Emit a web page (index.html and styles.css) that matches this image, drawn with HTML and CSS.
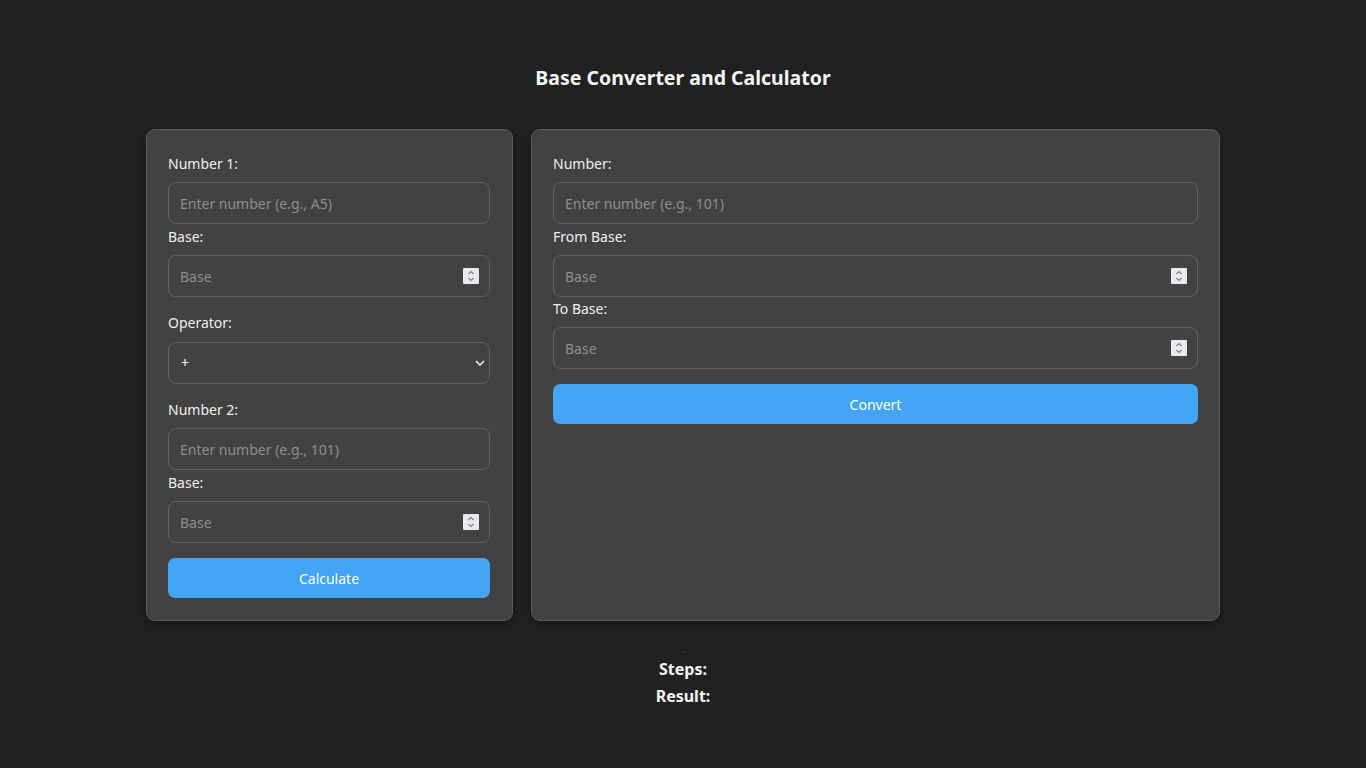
FILE: index.html
```html
<!DOCTYPE html>
<html lang="en">
<head>
<meta charset="utf-8">
<title>Base Converter and Calculator</title>
<link rel="stylesheet" href="styles.css">
</head>
<body>
<h1 class="title">Base Converter and Calculator</h1>
<main class="cards">
  <section class="card card-calc">
    <div class="group">
      <label class="label">Number 1:</label>
      <input class="field" type="text" placeholder="Enter number (e.g., A5)">
      <label class="label label-tight">Base:</label>
      <div class="num-wrap">
        <input class="field" type="text" placeholder="Base">
        <span class="spin"><svg width="16" height="16" viewBox="0 0 16 16"><path d="M5.5 6 L8 3.5 L10.5 6 M5.5 10 L8 12.5 L10.5 10" fill="none" stroke="#7b7b80" stroke-width="1.1"/></svg></span>
      </div>
    </div>
    <div class="group">
      <label class="label">Operator:</label>
      <div class="select-wrap">
        <div class="field select">+</div>
        <svg class="chev" width="10" height="8" viewBox="0 0 10 8"><path d="M1 2 L5 6 L9 2" fill="none" stroke="#ffffff" stroke-width="1.4"/></svg>
      </div>
    </div>
    <div class="group">
      <label class="label">Number 2:</label>
      <input class="field" type="text" placeholder="Enter number (e.g., 101)">
      <label class="label label-tight">Base:</label>
      <div class="num-wrap">
        <input class="field" type="text" placeholder="Base">
        <span class="spin"><svg width="16" height="16" viewBox="0 0 16 16"><path d="M5.5 6 L8 3.5 L10.5 6 M5.5 10 L8 12.5 L10.5 10" fill="none" stroke="#7b7b80" stroke-width="1.1"/></svg></span>
      </div>
    </div>
    <button class="btn">Calculate</button>
  </section>
  <section class="card card-conv">
    <div class="group">
      <label class="label">Number:</label>
      <input class="field" type="text" placeholder="Enter number (e.g., 101)">
      <label class="label label-tight">From Base:</label>
      <div class="num-wrap">
        <input class="field" type="text" placeholder="Base">
        <span class="spin"><svg width="16" height="16" viewBox="0 0 16 16"><path d="M5.5 6 L8 3.5 L10.5 6 M5.5 10 L8 12.5 L10.5 10" fill="none" stroke="#7b7b80" stroke-width="1.1"/></svg></span>
      </div>
      <label class="label label-tight2">To Base:</label>
      <div class="num-wrap">
        <input class="field" type="text" placeholder="Base">
        <span class="spin"><svg width="16" height="16" viewBox="0 0 16 16"><path d="M5.5 6 L8 3.5 L10.5 6 M5.5 10 L8 12.5 L10.5 10" fill="none" stroke="#7b7b80" stroke-width="1.1"/></svg></span>
      </div>
    </div>
    <button class="btn">Convert</button>
  </section>
</main>
<section class="output">
  <div class="dot"></div>
  <h3 class="out-title">Steps:</h3>
  <h3 class="out-title">Result:</h3>
</section>
</body>
</html>
```
FILE: styles.css
```css
* { box-sizing: border-box; }
html, body { margin: 0; padding: 0; }
body {
  background: #212121;
  color: #f2f2f2;
  font-family: "Noto Sans", "Open Sans", sans-serif;
  font-size: 14px;
  padding-top: 63px;
}
.title {
  margin: 0;
  text-align: center;
  font-size: 19.5px;
  line-height: 30px;
  font-weight: 700;
  color: #f5f5f5;
}
.cards {
  display: grid;
  grid-template-columns: 367px 689px;
  column-gap: 18px;
  justify-content: center;
  align-items: stretch;
  margin-top: 36px;
}
.card {
  background: #424242;
  border: 1px solid #5c5c5c;
  border-radius: 9px;
  padding: 24px 22px 22px 21px;
  box-shadow: 0 3px 8px rgba(0,0,0,0.35);
  display: flex;
  flex-direction: column;
}
.card-conv { padding-right: 21px; }
.group {
  display: flex;
  flex-direction: column;
  margin-bottom: 15px;
}
.label {
  display: block;
  line-height: 20px;
  margin-bottom: 8px;
  color: #f0f0f0;
}
.label-tight { margin-top: 3px; }
.label-tight2 { margin-top: 2px; }
.field {
  display: block;
  width: 100%;
  height: 42px;
  background: #424242;
  border: 1px solid #616161;
  border-radius: 8px;
  padding: 0 11px;
  color: #f0f0f0;
  font-family: inherit;
  font-size: 14px;
  outline: none;
}
.field::placeholder { color: #8f8f8f; }
.card .group:not(:last-of-type) { margin-bottom: 16px; }
.num-wrap, .select-wrap { position: relative; }
.select-wrap { margin-top: 1px; }
.spin {
  position: absolute;
  right: 11px;
  top: 13px;
  width: 16px;
  height: 16px;
  background: #e9e9ed;
  border-radius: 1px;
  display: block;
}
.spin svg { display: block; }
.select {
  line-height: 40px;
  padding-left: 12px;
  color: #ffffff;
}
.chev {
  position: absolute;
  right: 5px;
  top: 17px;
}
.btn {
  display: block;
  width: 100%;
  height: 40px;
  border: none;
  border-radius: 7px;
  background: #42a5f5;
  color: #ffffff;
  font-family: inherit;
  font-size: 14px;
  cursor: pointer;
}
.output {
  text-align: center;
  padding-top: 31px;
}
.dot {
  width: 1px;
  height: 1px;
  background: #777;
  margin: 0 auto;
}
.out-title {
  margin: 0;
  font-size: 16px;
  line-height: 27px;
  font-weight: 700;
  color: #f5f5f5;
}
.output .dot + .out-title { margin-top: 3px; }
```
